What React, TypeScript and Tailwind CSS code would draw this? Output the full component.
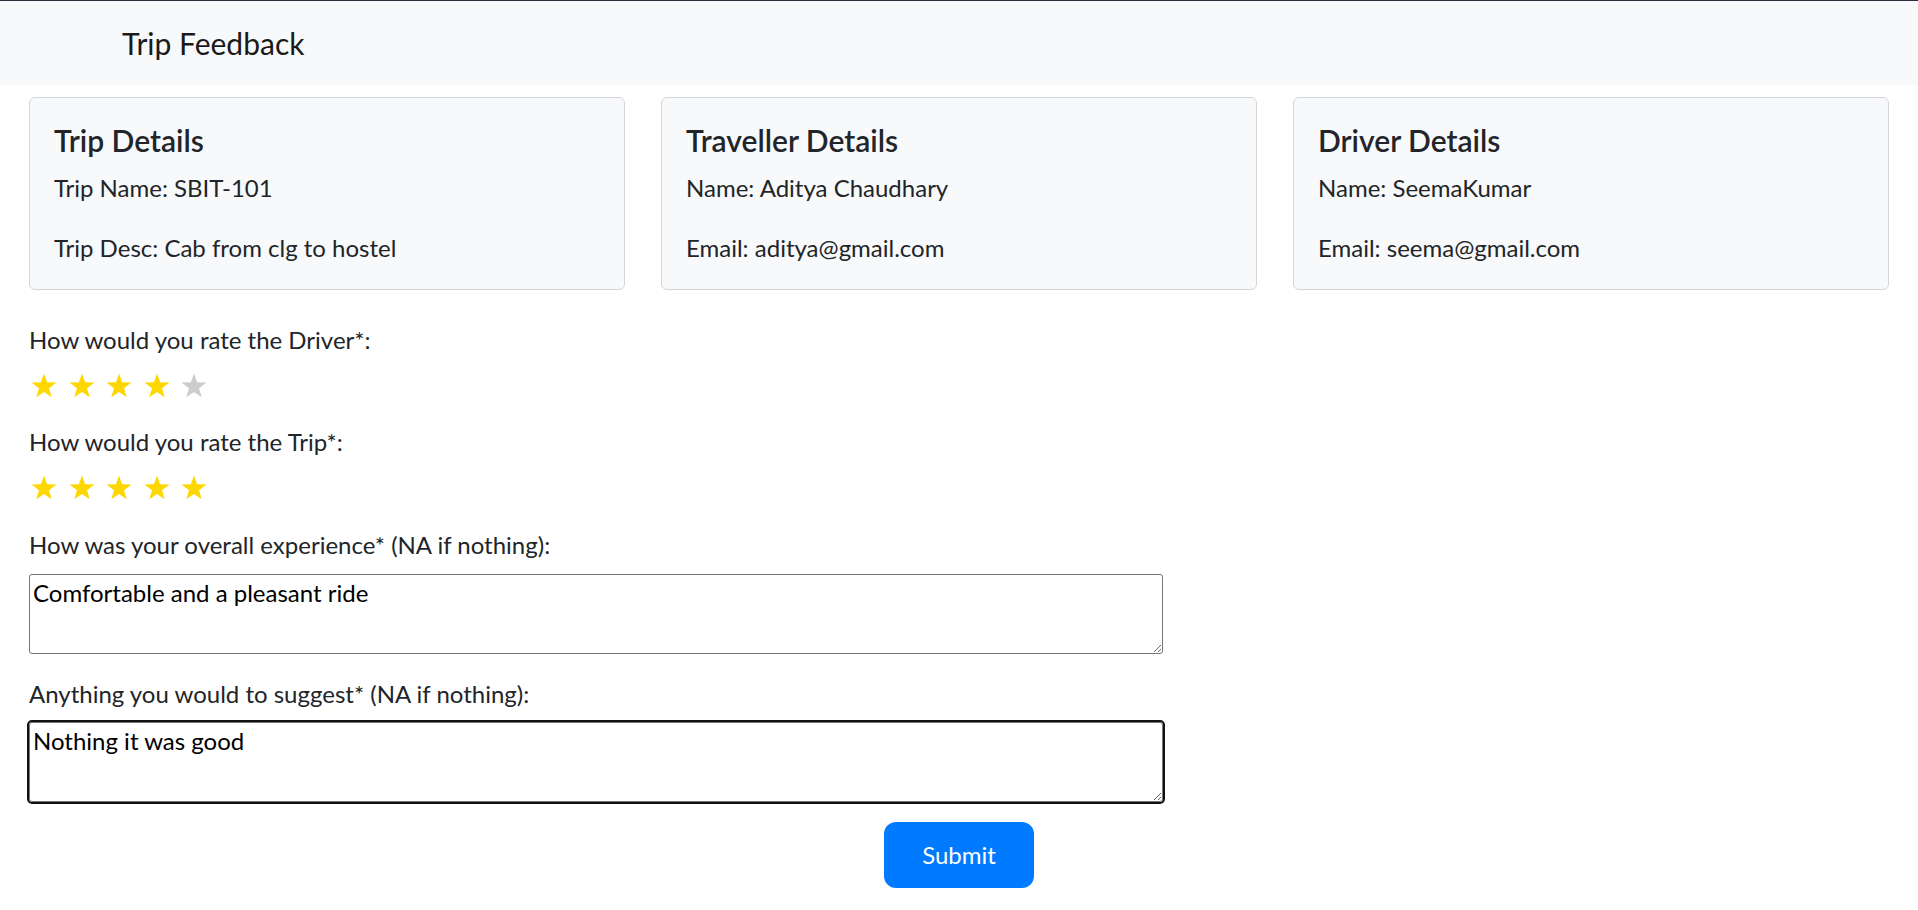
import { useEffect, useRef } from "react";

const font = { fontFamily: "Lato, 'Open Sans', sans-serif" };

type Detail = { title: string; lines: string[] };

const details: Detail[] = [
  { title: "Trip Details", lines: ["Trip Name: SBIT-101", "Trip Desc: Cab from clg to hostel"] },
  { title: "Traveller Details", lines: ["Name: Aditya Chaudhary", "Email: aditya@gmail.com"] },
  { title: "Driver Details", lines: ["Name: SeemaKumar", "Email: seema@gmail.com"] },
];

function Star({ on }: { on: boolean }) {
  return (
    <svg width="26" height="25" viewBox="0 0 26 25" className="shrink-0">
      <polygon
        points="13,0.5 16.1,9.3 25.5,9.5 18,15.2 20.7,24.3 13,18.9 5.3,24.3 8,15.2 0.5,9.5 9.9,9.3"
        fill={on ? "#ffd700" : "#cccccc"}
      />
    </svg>
  );
}

function Stars({ value }: { value: number }) {
  return (
    <div className="flex gap-[11.5px] pl-[2px]">
      {[1, 2, 3, 4, 5].map((n) => (
        <Star key={n} on={n <= value} />
      ))}
    </div>
  );
}

function DetailCard({ d }: { d: Detail }) {
  return (
    <div className="rounded-[6px] border border-[#d3d5d8] bg-[#f8f9fa] p-6 h-[193px]">
      <h5 className="text-[30px] leading-[36px] font-semibold text-[#212529] mb-3">{d.title}</h5>
      <p className="text-[24px] leading-[36px] text-[#212529] mb-6">{d.lines[0]}</p>
      <p className="text-[24px] leading-[36px] text-[#212529]">{d.lines[1]}</p>
    </div>
  );
}

export default function App() {
  const suggestRef = useRef<HTMLTextAreaElement>(null);

  useEffect(() => {
    const el = suggestRef.current;
    if (el) {
      el.focus();
      el.setSelectionRange(el.value.length, el.value.length);
    }
  }, []);

  return (
    <div className="min-h-[910px] bg-white text-[#212529]" style={font}>
      {/* Header */}
      <div className="h-[85px] border-t border-[#2b2f3d] bg-[#f8f9fa] flex items-center pl-[122px]">
        <span className="text-[30px] leading-[36px] text-[#1a1a1a]">Trip Feedback</span>
      </div>

      {/* Detail cards */}
      <div className="grid grid-cols-3 gap-[36px] px-[29px] mt-3">
        {details.map((d) => (
          <DetailCard key={d.title} d={d} />
        ))}
      </div>

      {/* Feedback form */}
      <form className="px-[29px] mt-[32px]" onSubmit={(e) => e.preventDefault()}>
        <label className="block text-[24px] leading-[36px]">How would you rate the Driver*:</label>
        <div className="mt-[15px]">
          <Stars value={4} />
        </div>

        <label className="block text-[24px] leading-[36px] mt-[26px]">How would you rate the Trip*:</label>
        <div className="mt-[15px]">
          <Stars value={5} />
        </div>

        <label className="block text-[24px] leading-[36px] mt-[27px]">
          How was your overall experience* (NA if nothing):
        </label>
        <textarea
          className="block w-[1134px] h-[80px] mt-[11px] border border-[#767676] rounded-[3px] bg-white px-[3px] pt-[2px] text-[24px] leading-[32px] text-black"
          style={font}
          defaultValue="Comfortable and a pleasant ride"
        />

        <label className="block text-[24px] leading-[36px] mt-[22px]">
          Anything you would to suggest* (NA if nothing):
        </label>
        <textarea
          ref={suggestRef}
          className="block w-[1134px] h-[80px] mt-[10px] border border-[#767676] rounded-[3px] bg-white px-[3px] pt-[2px] text-[24px] leading-[32px] text-black caret-black outline-2 outline-[#101010] focus:outline-2 focus:outline-[#101010]"
          style={font}
          defaultValue="Nothing it was good"
        />

        <div className="flex justify-center mt-[20px]">
          <button
            type="submit"
            className="w-[150px] h-[66px] rounded-[12px] bg-[#007bff] text-white text-[24px] leading-[36px]"
          >
            Submit
          </button>
        </div>
      </form>
    </div>
  );
}
